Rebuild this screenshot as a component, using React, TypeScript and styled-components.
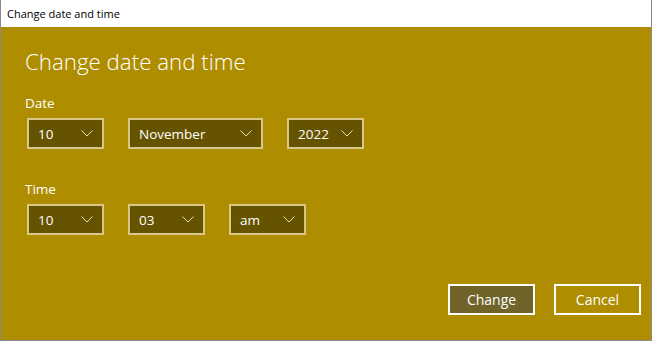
import React from "react";
import styled, { createGlobalStyle } from "styled-components";

const Global = createGlobalStyle`
  html, body { margin: 0; padding: 0; background: #ffffff; }
  body { font-family: "Open Sans", "Noto Sans", sans-serif; }
  * { box-sizing: border-box; }
`;

const Window = styled.div`
  width: 652px;
  height: 341px;
  display: flex;
  flex-direction: column;
  border-left: 1px solid #8a8a8a;
  border-right: 1px solid #8a8a8a;
  border-bottom: 1px solid #8a8a8a;
  background: #ae8e00;
`;

const TitleBar = styled.div`
  height: 27px;
  flex: none;
  background: #ffffff;
  display: flex;
  align-items: center;
  padding-left: 6px;
  font-size: 11px;
  color: #000;
`;

const Body = styled.div`
  flex: 1;
  display: flex;
  flex-direction: column;
  padding: 20px 10px 25px 24px;
  color: #ffffff;
`;

const Heading = styled.h1`
  margin: 0 0 17px 0;
  font-size: 22.3px;
  font-weight: 300;
  line-height: 30px;
`;

const Label = styled.div`
  font-size: 13.5px;
  line-height: 18px;
  margin-bottom: 6px;
`;

const Row = styled.div<{ $mb?: number }>`
  display: flex;
  gap: 24px;
  padding-left: 2px;
  margin-bottom: ${(p) => p.$mb ?? 0}px;
`;

const Select = styled.div<{ $w: number }>`
  width: ${(p) => p.$w}px;
  height: 31px;
  border: 2px solid #d8c788;
  background: #665300;
  display: flex;
  align-items: center;
  justify-content: space-between;
  padding: 0 9px 0 9px;
  font-size: 13.5px;
  color: #ffffff;
`;

const Footer = styled.div`
  margin-top: auto;
  display: flex;
  justify-content: flex-end;
  gap: 19px;
`;

const Button = styled.div<{ $primary?: boolean }>`
  width: 87px;
  height: 31px;
  border: 2px solid #ffffff;
  background: ${(p) => (p.$primary ? "#6f632a" : "transparent")};
  display: flex;
  align-items: center;
  justify-content: center;
  font-size: 14px;
  color: #ffffff;
`;

const Chevron = () => (
  <svg width="12" height="7" viewBox="0 0 12 7" fill="none">
    <path d="M0.5 0.5 L6 6 L11.5 0.5" stroke="#e8ddb0" strokeWidth="1" />
  </svg>
);

const Drop = ({ w, value }: { w: number; value: string }) => (
  <Select $w={w}>
    <span>{value}</span>
    <Chevron />
  </Select>
);

export default function App() {
  return (
    <>
      <Global />
      <Window>
        <TitleBar>Change date and time</TitleBar>
        <Body>
          <Heading>Change date and time</Heading>
          <Label>Date</Label>
          <Row $mb={31}>
            <Drop w={77} value="10" />
            <Drop w={135} value="November" />
            <Drop w={77} value="2022" />
          </Row>
          <Label>Time</Label>
          <Row>
            <Drop w={77} value="10" />
            <Drop w={77} value="03" />
            <Drop w={77} value="am" />
          </Row>
          <Footer>
            <Button $primary>Change</Button>
            <Button>Cancel</Button>
          </Footer>
        </Body>
      </Window>
    </>
  );
}
